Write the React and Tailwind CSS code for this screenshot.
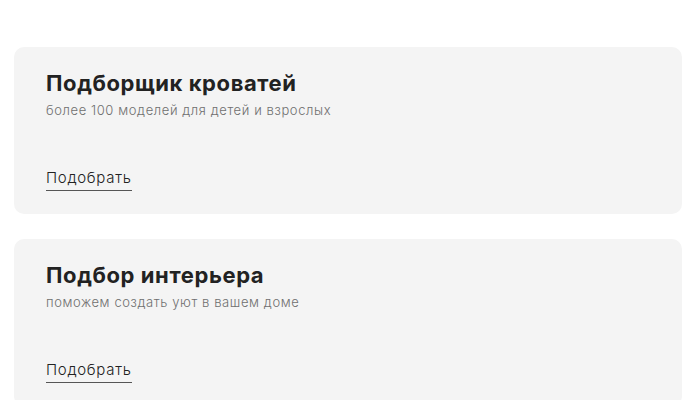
const cards = [
  { title: 'Подборщик кроватей', text: 'более 100 моделей для детей и взрослых' },
  { title: 'Подбор интерьера', text: 'поможем создать уют в вашем доме' },
]

function PickerCard({ title, text }) {
  return (
    <div className="flex h-[167px] flex-col rounded-[10px] bg-[#f4f4f4] px-8 pt-[22px]">
      <h2 className="text-[22px] font-bold leading-[28px] tracking-[0.6px] text-[#222]">{title}</h2>
      <p className="mt-[3px] text-[13px] font-light leading-5 tracking-[0.6px] text-[#6f6f6f]">{text}</p>
      <a href="#" className="mt-[48px] self-start border-b border-[#555] pb-[2px] text-[15px] font-light leading-5 tracking-[0.7px] text-[#222]">
        Подобрать
      </a>
    </div>
  )
}

export default function App() {
  return (
    <div className="h-[400px] w-[700px] overflow-hidden bg-white pl-[14px] pr-[18px] pt-[47px] font-['Inter',sans-serif]">
      <div className="flex flex-col gap-[25px]">
        {cards.map((c) => (
          <PickerCard key={c.title} {...c} />
        ))}
      </div>
    </div>
  )
}
